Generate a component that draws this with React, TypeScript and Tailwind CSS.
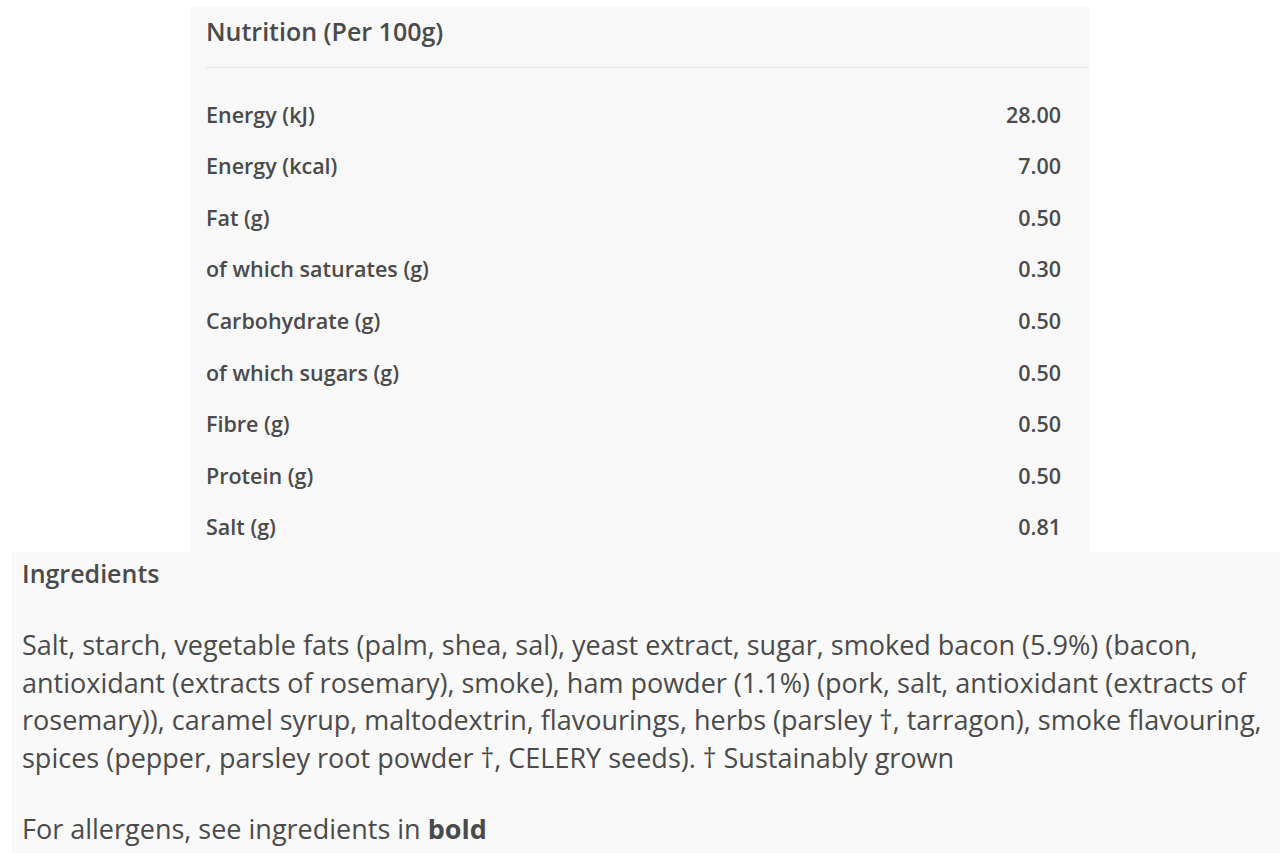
import React from "react";

const rows: [string, string][] = [
  ["Energy (kJ)", "28.00"],
  ["Energy (kcal)", "7.00"],
  ["Fat (g)", "0.50"],
  ["of which saturates (g)", "0.30"],
  ["Carbohydrate (g)", "0.50"],
  ["of which sugars (g)", "0.50"],
  ["Fibre (g)", "0.50"],
  ["Protein (g)", "0.50"],
  ["Salt (g)", "0.81"],
];

export default function App() {
  return (
    <div
      className="w-[1280px] h-[853px] bg-white overflow-hidden text-[#4a4a4a]"
      style={{ fontFamily: "'Open Sans', 'Noto Sans', sans-serif" }}
    >
      <div className="pt-[7px] pl-[191px]">
        <div className="w-[898px] h-[545px] bg-[#f8f8f8] pl-[15px]">
          <div className="h-[61px] border-b border-[#e2e2e2] pt-[9px] text-[25px] leading-[30px] font-semibold">
            Nutrition (Per 100g)
          </div>
          <div className="pt-[21px] pr-[28px]">
            {rows.map(([k, v]) => (
              <div key={k} className="h-[51.6px] flex items-center justify-between text-[21.5px] font-semibold">
                <span>{k}</span>
                <span>{v}</span>
              </div>
            ))}
          </div>
        </div>
      </div>
      <div className="ml-[12px] h-[301px] bg-[#f9f9f9] pl-[10px] pt-[6px] text-[27px] leading-[37.5px] whitespace-nowrap">
        <div className="text-[25px] font-semibold leading-[30px]">Ingredients</div>
        <p className="mt-[38px]">
          Salt, starch, vegetable fats (palm, shea, sal), yeast extract, sugar, smoked bacon (5.9%) (bacon,
          <br />
          antioxidant (extracts of rosemary), smoke), ham powder (1.1%) (pork, salt, antioxidant (extracts of
          <br />
          rosemary)), caramel syrup, maltodextrin, flavourings, herbs (parsley †, tarragon), smoke flavouring,
          <br />
          spices (pepper, parsley root powder †, CELERY seeds). † Sustainably grown
        </p>
        <p className="mt-[34px]">
          For allergens, see ingredients in <b className="font-bold">bold</b>
        </p>
      </div>
    </div>
  );
}
